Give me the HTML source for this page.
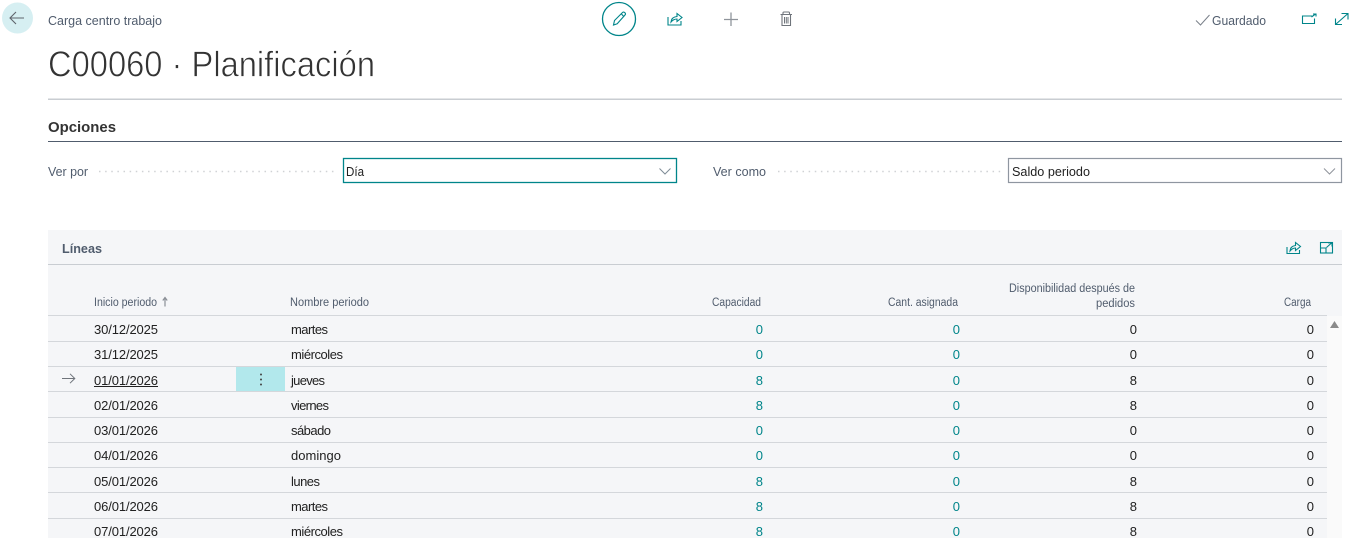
<!DOCTYPE html>
<html lang="es">
<head>
<meta charset="utf-8">
<title>C00060 · Planificación</title>
<style>
html,body{margin:0;padding:0;background:#fff;width:1356px;height:538px;overflow:hidden}
svg{display:block;font-family:"Liberation Sans",sans-serif}
.h{font-size:11.5px;fill:#505c6d}
.d{font-size:13px;fill:#212121}
.n{font-size:13px;fill:#212121}
.l{font-size:13px;fill:#00858a;text-anchor:end}
.k{font-size:13px;fill:#212121;text-anchor:end}
.i{fill:none;stroke:#00858a;stroke-width:1.1}
</style>
</head>
<body>
<svg width="1356" height="538" viewBox="0 0 1356 538" xmlns="http://www.w3.org/2000/svg">
<rect width="1356" height="538" fill="#fff"/>

<!-- back -->
<circle cx="17.5" cy="18" r="15.5" fill="#d6eff2"/>
<path d="M10 18H24M16 12L10 18L16 24" fill="none" stroke="#5f646c" stroke-width="1.1"/>
<text x="48" y="25" font-size="12.5" fill="#505c6d" textLength="114" lengthAdjust="spacingAndGlyphs">Carga centro trabajo</text>
<text x="48" y="76.5" font-size="36" fill="#333" stroke="#fff" stroke-width="0.7" textLength="327" lengthAdjust="spacingAndGlyphs">C00060 · Planificación</text>
<rect x="48" y="98.5" width="1294" height="1.5" fill="#c9cdd2"/>

<!-- top actions -->
<circle cx="619" cy="19" r="16.5" fill="#fff" stroke="#00858a" stroke-width="1.3"/>
<path d="M613.500 25L614.500 20.500L622.500 12.500Q623.700 11.500 625 12.800Q626 14 625 15L617.200 23.800Z" class="i"/>
<path d="M621 13.500L624 16.800" class="i"/>
<path d="M668 17V25H681V21" class="i"/>
<path d="M671 22Q671.500 17 677 16.500V13.500L682 17.500L677 21.500V19Q673.500 19 671 22Z" class="i"/>
<path d="M724 19.500H738M731 12.500V26" fill="none" stroke="#8f949b" stroke-width="1.3"/>
<path d="M780.500 14.500H792M783 14.500V13Q783 12 784 12H788.500Q789.500 12 789.500 13V14.500M782 14.500V25.500H790.500V14.500" fill="none" stroke="#6f747b" stroke-width="1.1"/>
<path d="M784.500 17V23.500M786.300 17V23.500M788 17V23.500" fill="none" stroke="#6f747b" stroke-width="1"/>

<path d="M1196 20.500L1200.500 25L1209.500 15" fill="none" stroke="#7a808a" stroke-width="1"/>
<text x="1212" y="25" font-size="12.500" fill="#505c6d" textLength="54" lengthAdjust="spacingAndGlyphs">Guardado</text>
<path d="M1312 16H1302.500V23.500H1314.500V18.500" class="i" stroke-width="1.200"/>
<path d="M1311.500 17L1315.500 14M1313 14H1316V16.500" class="i" stroke-width="0.900"/>
<path d="M1335.500 24.500L1348 13.500M1341.500 13.500H1348V19.500M1335.500 18.500V24.500H1342" class="i"/>

<!-- Opciones -->
<text x="48" y="132" font-size="14.500" font-weight="bold" fill="#333" textLength="68" lengthAdjust="spacingAndGlyphs">Opciones</text>
<rect x="48" y="141" width="1294" height="1" fill="#505c6d"/>

<text x="48" y="176" font-size="13" fill="#505c6d" textLength="40" lengthAdjust="spacingAndGlyphs">Ver por</text>
<line x1="99" y1="171.500" x2="338" y2="171.500" stroke="#d0d2d5" stroke-width="1.500" stroke-dasharray="1.500 4.630"/>
<rect x="343.500" y="158.500" width="333" height="24" fill="#fff" stroke="#00858a" stroke-width="1.300"/>
<text x="346" y="176" class="n" textLength="18" lengthAdjust="spacingAndGlyphs">Día</text>
<path d="M659.500 168.500L665 174L670.500 168.500" fill="none" stroke="#7f8c96" stroke-width="1"/>

<text x="713" y="176" font-size="13" fill="#505c6d" textLength="53" lengthAdjust="spacingAndGlyphs">Ver como</text>
<line x1="778" y1="171.500" x2="1002" y2="171.500" stroke="#d0d2d5" stroke-width="1.500" stroke-dasharray="1.500 4.630"/>
<rect x="1008.500" y="158.500" width="333" height="24" fill="#fff" stroke="#8f96a0" stroke-width="1.200"/>
<text x="1012" y="176" class="n" textLength="78" lengthAdjust="spacingAndGlyphs">Saldo periodo</text>
<path d="M1324 168.500L1329.500 174L1335 168.500" fill="none" stroke="#8f949b" stroke-width="1"/>

<!-- Panel -->
<rect x="48" y="230" width="1294" height="308" fill="#f5f6f8"/>
<rect x="1327" y="316" width="15" height="222" fill="#fafafa"/>
<text x="62" y="253" font-size="13" font-weight="bold" fill="#505c6d" textLength="40" lengthAdjust="spacingAndGlyphs">Líneas</text>
<path d="M1287 247V253.500H1299.500V250" class="i"/>
<path d="M1290 251Q1290.500 246 1295.500 245.500V242.500L1300.500 246.500L1295.500 250.500V248Q1292.500 248 1290 251Z" class="i"/>
<rect x="1320.500" y="242.500" width="12" height="10.500" class="i"/>
<path d="M1320.500 248H1326V253M1326.500 247.500L1331.500 243M1328 242.800H1332V246.500" class="i"/>
<rect x="48" y="264" width="1294" height="1" fill="#c9cdd2"/>

<text x="94" y="306" class="h" textLength="63" lengthAdjust="spacingAndGlyphs">Inicio periodo</text>
<path d="M165 306.500V298.500M162.800 300.500L165 297.500L167.200 300.500" fill="none" stroke="#8a8f96" stroke-width="1.200"/>
<text x="290" y="306" class="h" textLength="79" lengthAdjust="spacingAndGlyphs">Nombre periodo</text>
<text x="712" y="306" class="h" textLength="49" lengthAdjust="spacingAndGlyphs">Capacidad</text>
<text x="888" y="306" class="h" textLength="70" lengthAdjust="spacingAndGlyphs">Cant. asignada</text>
<text x="1009" y="292" class="h" textLength="126" lengthAdjust="spacingAndGlyphs">Disponibilidad después de</text>
<text x="1096" y="307" class="h" textLength="39" lengthAdjust="spacingAndGlyphs">pedidos</text>
<text x="1284" y="306" class="h" textLength="27" lengthAdjust="spacingAndGlyphs">Carga</text>
<path d="M1330 328L1334.500 321L1339 328Z" fill="#8a8a8a"/>

<!-- row lines -->
<g fill="#d4d7db">
<rect x="48" y="315" width="1279" height="1"/>
<rect x="48" y="341" width="1279" height="1"/>
<rect x="48" y="366" width="1279" height="1"/>
<rect x="48" y="391" width="1279" height="1"/>
<rect x="48" y="417" width="1279" height="1"/>
<rect x="48" y="442" width="1279" height="1"/>
<rect x="48" y="467" width="1279" height="1"/>
<rect x="48" y="492" width="1279" height="1"/>
<rect x="48" y="518" width="1279" height="1"/>
</g>

<!-- selected row -->
<rect x="236" y="367" width="49" height="24" fill="#b2e8ec"/>
<circle cx="261" cy="374.500" r="1" fill="#444"/>
<circle cx="261" cy="379.500" r="1" fill="#444"/>
<circle cx="261" cy="384.500" r="1" fill="#444"/>
<path d="M62 378.500H74.500M70 373.800L74.800 378.500L70 383.200" fill="none" stroke="#6f747b" stroke-width="1"/>
<rect x="94" y="386" width="64" height="1" fill="#212121"/>

<!-- rows -->
<g>
<text x="94" y="334" class="d" textLength="64">30/12/2025</text><text x="291" y="334" class="n" textLength="37">martes</text><text x="763" y="334" class="l">0</text><text x="960" y="334" class="l">0</text><text x="1137" y="334" class="k">0</text><text x="1314" y="334" class="k">0</text>
<text x="94" y="359" class="d" textLength="64">31/12/2025</text><text x="291" y="359" class="n" textLength="52">miércoles</text><text x="763" y="359" class="l">0</text><text x="960" y="359" class="l">0</text><text x="1137" y="359" class="k">0</text><text x="1314" y="359" class="k">0</text>
<text x="94" y="385" class="d" textLength="64">01/01/2026</text><text x="291" y="385" class="n" textLength="34">jueves</text><text x="763" y="385" class="l">8</text><text x="960" y="385" class="l">0</text><text x="1137" y="385" class="k">8</text><text x="1314" y="385" class="k">0</text>
<text x="94" y="410" class="d" textLength="64">02/01/2026</text><text x="291" y="410" class="n" textLength="38">viernes</text><text x="763" y="410" class="l">8</text><text x="960" y="410" class="l">0</text><text x="1137" y="410" class="k">8</text><text x="1314" y="410" class="k">0</text>
<text x="94" y="435" class="d" textLength="64">03/01/2026</text><text x="291" y="435" class="n" textLength="40">sábado</text><text x="763" y="435" class="l">0</text><text x="960" y="435" class="l">0</text><text x="1137" y="435" class="k">0</text><text x="1314" y="435" class="k">0</text>
<text x="94" y="460" class="d" textLength="64">04/01/2026</text><text x="291" y="460" class="n" textLength="50">domingo</text><text x="763" y="460" class="l">0</text><text x="960" y="460" class="l">0</text><text x="1137" y="460" class="k">0</text><text x="1314" y="460" class="k">0</text>
<text x="94" y="486" class="d" textLength="64">05/01/2026</text><text x="291" y="486" class="n" textLength="29">lunes</text><text x="763" y="486" class="l">8</text><text x="960" y="486" class="l">0</text><text x="1137" y="486" class="k">8</text><text x="1314" y="486" class="k">0</text>
<text x="94" y="511" class="d" textLength="64">06/01/2026</text><text x="291" y="511" class="n" textLength="37">martes</text><text x="763" y="511" class="l">8</text><text x="960" y="511" class="l">0</text><text x="1137" y="511" class="k">8</text><text x="1314" y="511" class="k">0</text>
<text x="94" y="536" class="d" textLength="64">07/01/2026</text><text x="291" y="536" class="n" textLength="52">miércoles</text><text x="763" y="536" class="l">8</text><text x="960" y="536" class="l">0</text><text x="1137" y="536" class="k">8</text><text x="1314" y="536" class="k">0</text>
</g>
</svg>
</body>
</html>
